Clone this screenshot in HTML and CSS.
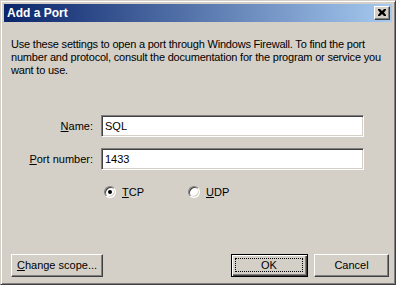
FILE: index.html
```html
<!DOCTYPE html>
<html lang="en">
<head>
<meta charset="UTF-8" />
<title>Add a Port</title>
<link rel="stylesheet" href="styles.css">
</head>
<body>
  <div class="window">
    <div class="titlebar">
      <span class="title">Add a Port</span>
      <span class="close-btn">
        <svg width="8" height="7" viewBox="0 0 8 7"><path d="M0 0h2l2 2 2-2h2v1l-2 2.5 2 2.5v1h-2l-2-2-2 2h-2v-1l2-2.5-2-2.5z" fill="#000"/></svg>
      </span>
    </div>

    <div class="body">
      <p class="intro">Use these settings to open a port through Windows Firewall. To find the port number and protocol, consult the documentation for the program or service you want to use.</p>

      <div class="form">
        <div class="row">
          <label class="label"><u>N</u>ame:</label>
          <div class="field">SQL</div>
        </div>
        <div class="row">
          <label class="label"><u>P</u>ort number:</label>
          <div class="field">1433</div>
        </div>
        <div class="radios">
          <span class="radio checked"><span class="dot"></span></span>
          <span class="radio-label"><u>T</u>CP</span>
          <span class="radio"></span>
          <span class="radio-label"><u>U</u>DP</span>
        </div>
      </div>

      <div class="buttons">
        <span class="btn wide"><u>C</u>hange scope...</span>
        <span class="spacer"></span>
        <span class="btn default"><span class="focus">OK</span></span>
        <span class="btn">Cancel</span>
      </div>
    </div>
  </div>
</body>
</html>
```

FILE: styles.css
```css
html, body {
  margin: 0;
  padding: 0;
}

body {
  width: 396px;
  height: 285px;
  font-family: "Liberation Sans", Arial, sans-serif;
  font-size: 11px;
  color: #000;
}

.window {
  box-sizing: border-box;
  width: 396px;
  height: 285px;
  background: #d4d0c8;
  border: 1px solid;
  border-color: #d4d0c8 #404040 #404040 #d4d0c8;
  box-shadow: inset 1px 1px 0 #fff, inset -1px -1px 0 #808080;
  padding: 3px;
  display: flex;
  flex-direction: column;
}

.titlebar {
  height: 18px;
  background: linear-gradient(to right, #0a246a, #a6caf0);
  display: flex;
  align-items: center;
  padding: 0 2px 0 3px;
}

.title {
  flex: 1;
  color: #fff;
  font-weight: bold;
  font-size: 12px;
  font-family: "Liberation Sans", Arial, sans-serif;
}

.close-btn {
  box-sizing: border-box;
  width: 16px;
  height: 14px;
  background: #d4d0c8;
  border: 1px solid;
  border-color: #fff #404040 #404040 #fff;
  box-shadow: inset -1px -1px 0 #808080;
  display: flex;
  align-items: center;
  justify-content: center;
  padding: 0 1px 1px 0;
}

.body {
  flex: 1;
  display: flex;
  flex-direction: column;
  padding: 0 3px 4px 7px;
}

.intro {
  margin: 16px 0 0;
  line-height: 13px;
  letter-spacing: -0.2px;
  width: 378px;
}

.form {
  margin-top: 38px;
  display: flex;
  flex-direction: column;
  gap: 11px;
}

.row {
  display: flex;
  align-items: center;
  gap: 8px;
}

.label {
  width: 82px;
  text-align: right;
}

.field {
  box-sizing: border-box;
  width: 263px;
  height: 22px;
  background: #fff;
  border: 1px solid;
  border-color: #808080 #fff #fff #808080;
  box-shadow: inset 1px 1px 0 #404040, inset -1px -1px 0 #d4d0c8;
  padding: 4px 3px 0;
  line-height: 13px;
}

.radios {
  display: flex;
  align-items: center;
  margin-top: 4px;
  padding-left: 93px;
  height: 13px;
}

.radio {
  box-sizing: border-box;
  width: 12px;
  height: 12px;
  border-radius: 50%;
  background: #fff;
  border: 1px solid;
  border-color: #808080 #fff #fff #808080;
  box-shadow: inset 1px 1px 0 #404040, inset -1px -1px 0 #d4d0c8;
  display: flex;
  align-items: center;
  justify-content: center;
}

.dot {
  width: 4px;
  height: 4px;
  border-radius: 50%;
  background: #000;
}

.radio-label {
  margin-left: 6px;
  width: 66px;
}

.buttons {
  margin-top: auto;
  display: flex;
  gap: 6px;
}

.spacer {
  flex: 1;
}

.btn {
  box-sizing: border-box;
  width: 75px;
  height: 23px;
  border: 1px solid;
  border-color: #fff #404040 #404040 #fff;
  box-shadow: inset -1px -1px 0 #808080;
  display: flex;
  align-items: center;
  justify-content: center;
  padding-bottom: 1px;
}

.btn.wide {
  width: 92px;
}

.btn.default {
  width: 77px;
  border: 1px solid #000;
  box-shadow: inset 1px 1px 0 #fff, inset -1px -1px 0 #404040, inset -2px -2px 0 #808080;
  padding: 3px 4px 4px 3px;
}

.focus {
  box-sizing: border-box;
  width: 100%;
  height: 100%;
  border: 1px dotted #000;
  display: flex;
  align-items: center;
  justify-content: center;
}
```
